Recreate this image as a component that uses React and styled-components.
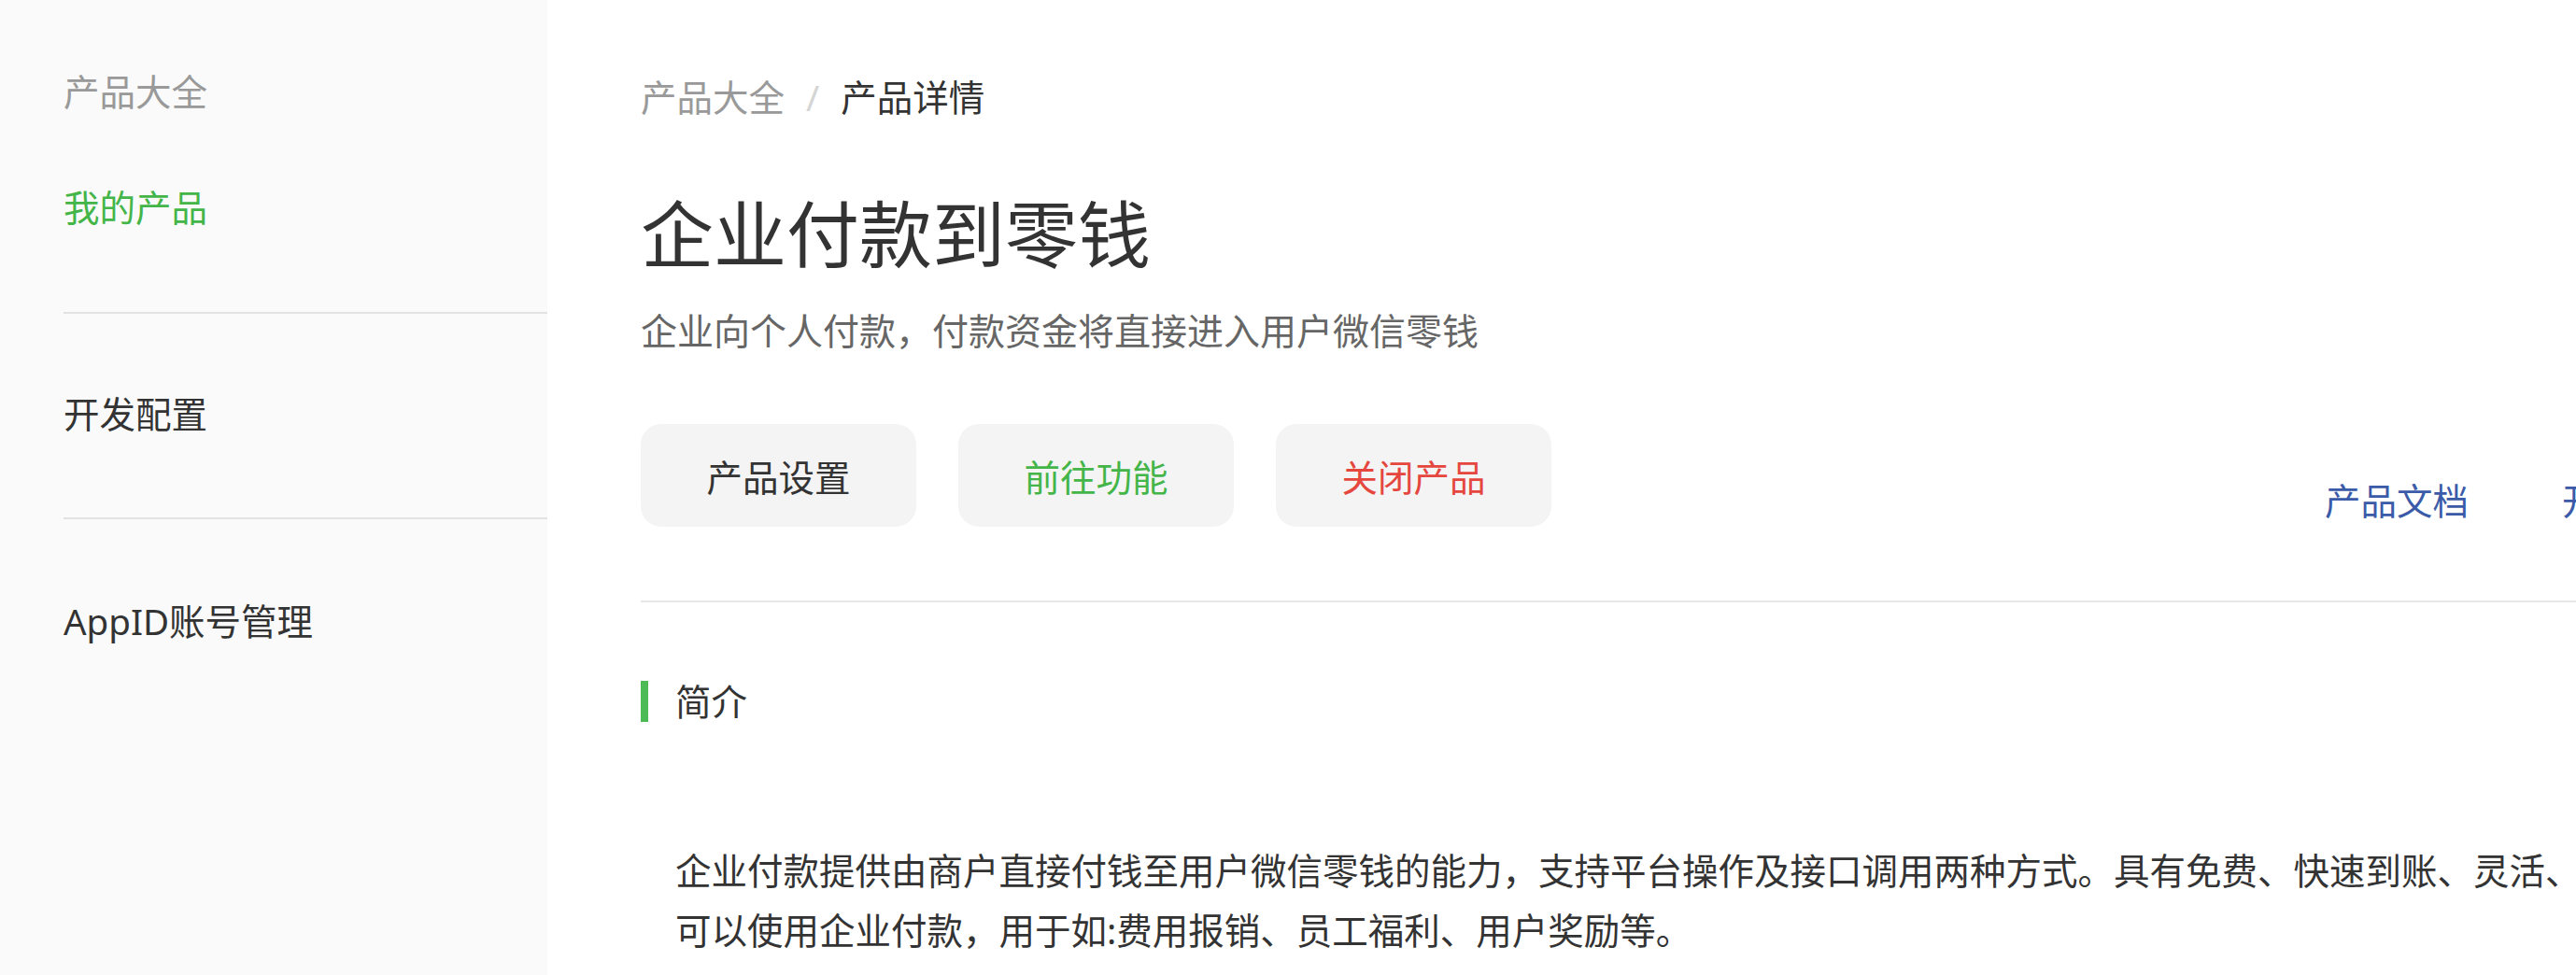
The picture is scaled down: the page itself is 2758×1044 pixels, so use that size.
import React from "react";
import styled, { createGlobalStyle } from "styled-components";

const GlobalStyle = createGlobalStyle`
  html, body {
    margin: 0;
    padding: 0;
    overflow: hidden;
    background: #ffffff;
  }
  body {
    font-family: "Noto Sans", "Noto Sans CJK SC", sans-serif;
    color: #333333;
  }
  * { box-sizing: border-box; }
`;

const Page = styled.div`
  display: flex;
  width: 2997px;
  min-height: 1044px;
`;

const Sidebar = styled.nav`
  flex: 0 0 586px;
  background: #fafafa;
  padding-left: 68px;
`;

const NavGroup = styled.div`
  padding-top: ${(p) => p.$top}px;
  padding-bottom: ${(p) => p.$bottom}px;
  border-bottom: ${(p) => (p.$last ? "none" : "2px solid #e2e2e2")};
`;

const NavItem = styled.div`
  font-size: 38.5px;
  line-height: 56px;
  margin-top: ${(p) => p.$gap || 0}px;
  color: ${(p) => p.$color || "#333333"};
  white-space: nowrap;
`;

const Main = styled.main`
  flex: 1;
  min-width: 0;
  padding: 76px 100px 0;
`;

const Breadcrumb = styled.div`
  display: flex;
  font-size: 38.5px;
  line-height: 56px;
  white-space: nowrap;
`;

const Crumb = styled.span`
  color: ${(p) => (p.$current ? "#333333" : "#999999")};
`;

const Sep = styled.span`
  color: #d5d5d5;
  margin: 0 23px;
`;

const Title = styled.h1`
  margin: 69px 0 0;
  font-size: 78px;
  line-height: 100px;
  font-weight: 400;
  color: #333333;
  white-space: nowrap;
`;

const Subtitle = styled.p`
  margin: 25px 0 0;
  font-size: 39px;
  line-height: 56px;
  color: #666666;
  white-space: nowrap;
`;

const ActionBar = styled.div`
  display: flex;
  align-items: flex-end;
  margin-top: 72px;
  padding-bottom: 79px;
  border-bottom: 2px solid #e8e8e8;
`;

const Buttons = styled.div`
  display: flex;
  gap: 45px;
`;

const Button = styled.button`
  width: 295px;
  height: 110px;
  border: none;
  border-radius: 22px;
  background: #f4f4f4;
  font-family: inherit;
  font-size: 38.5px;
  color: ${(p) => p.$color || "#333333"};
  padding: 0;
  cursor: pointer;
`;

const Links = styled.div`
  display: flex;
  gap: 100px;
  margin-left: auto;
`;

const DocLink = styled.a`
  font-size: 38.5px;
  line-height: 56px;
  color: #3b5ba8;
  text-decoration: none;
  white-space: nowrap;
`;

const SectionHeader = styled.div`
  display: flex;
  align-items: center;
  margin-top: 78px;
`;

const Bar = styled.span`
  width: 8px;
  height: 44px;
  background: #4cbb55;
`;

const SectionTitle = styled.h2`
  margin: 0 0 0 29px;
  font-size: 38.5px;
  line-height: 56px;
  font-weight: 400;
  color: #333333;
`;

const Paragraph = styled.p`
  margin: 121px 0 0;
  padding-left: 37px;
  font-size: 38.5px;
  line-height: 64px;
  color: #333333;
  white-space: nowrap;
`;

export default function App() {
  return (
    <>
      <GlobalStyle />
      <Page>
        <Sidebar>
          <NavGroup $top={70} $bottom={84}>
            <NavItem $color="#999999">产品大全</NavItem>
            <NavItem $color="#44b549" $gap={68}>我的产品</NavItem>
          </NavGroup>
          <NavGroup $top={79} $bottom={83}>
            <NavItem>开发配置</NavItem>
          </NavGroup>
          <NavGroup $top={81} $bottom={0} $last>
            <NavItem>AppID账号管理</NavItem>
          </NavGroup>
        </Sidebar>
        <Main>
          <Breadcrumb>
            <Crumb>产品大全</Crumb>
            <Sep>/</Sep>
            <Crumb $current>产品详情</Crumb>
          </Breadcrumb>
          <Title>企业付款到零钱</Title>
          <Subtitle>企业向个人付款，付款资金将直接进入用户微信零钱</Subtitle>
          <ActionBar>
            <Buttons>
              <Button>产品设置</Button>
              <Button $color="#44b549">前往功能</Button>
              <Button $color="#e5473f">关闭产品</Button>
            </Buttons>
            <Links>
              <DocLink href="#">产品文档</DocLink>
              <DocLink href="#">开发文档</DocLink>
            </Links>
          </ActionBar>
          <SectionHeader>
            <Bar />
            <SectionTitle>简介</SectionTitle>
          </SectionHeader>
          <Paragraph>
            企业付款提供由商户直接付钱至用户微信零钱的能力，支持平台操作及接口调用两种方式。具有免费、快速到账、灵活、安全等特点，商户
            <br />
            可以使用企业付款，用于如:费用报销、员工福利、用户奖励等。
          </Paragraph>
        </Main>
      </Page>
    </>
  );
}
